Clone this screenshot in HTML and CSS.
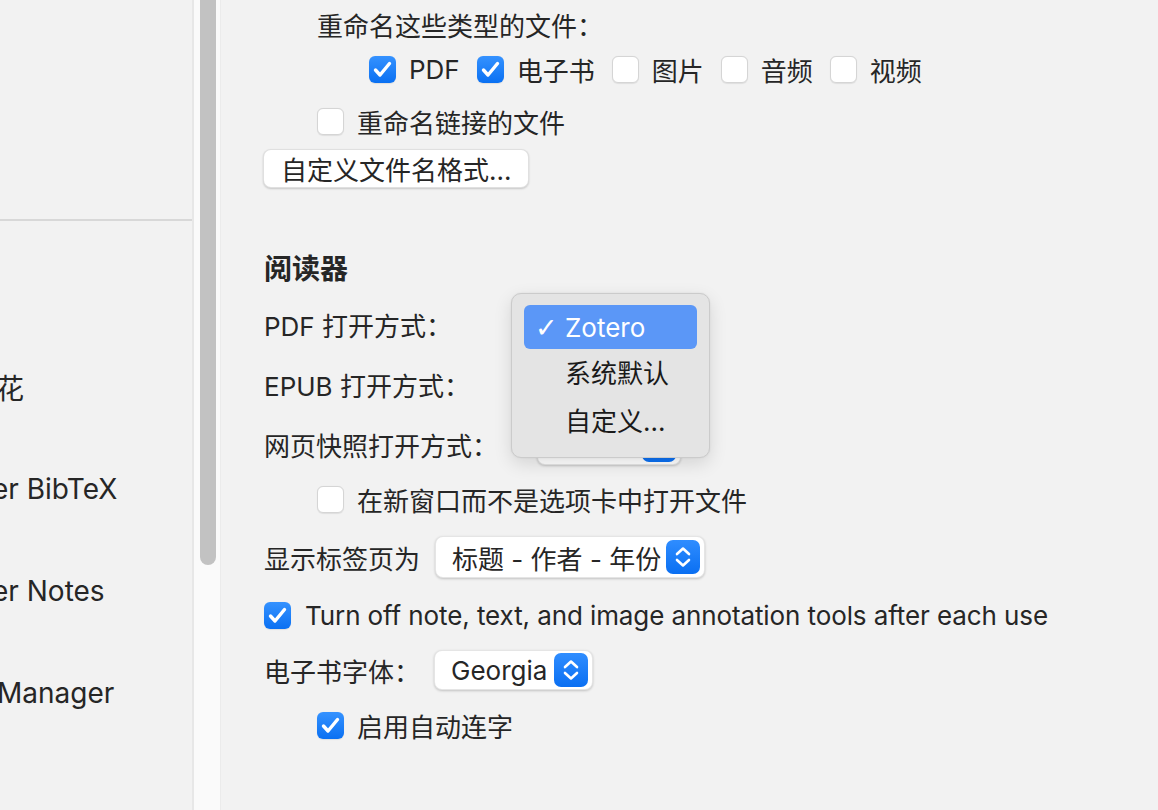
FILE: index.html
```html
<!DOCTYPE html>
<html lang="zh-CN">
<head>
<meta charset="utf-8">
<title>Zotero 设置</title>
<link rel="stylesheet" href="styles.css">
</head>
<body>
<div class="window">
  <aside class="sidebar">
    <div class="side-top"></div>
    <div class="side-divider"></div>
    <ul class="side-list">
      <li class="side-item">茉莉花</li>
      <li class="side-item">Better BibTeX</li>
      <li class="side-item">Better Notes</li>
      <li class="side-item">DOI Manager</li>
    </ul>
  </aside>
  <div class="scroll-track"><div class="scroll-thumb"></div></div>
  <main class="pane">
    <div class="row row-title indent-1">重命名这些类型的文件：</div>
    <div class="row row-types indent-2">
      <label class="check"><span class="box on"><svg viewBox="0 0 27 27"><path d="M6.5 14l4.5 5L20.5 7.5"/></svg></span><span class="lbl">PDF</span></label>
      <label class="check"><span class="box on"><svg viewBox="0 0 27 27"><path d="M6.5 14l4.5 5L20.5 7.5"/></svg></span><span class="lbl">电子书</span></label>
      <label class="check"><span class="box"></span><span class="lbl">图片</span></label>
      <label class="check"><span class="box"></span><span class="lbl">音频</span></label>
      <label class="check"><span class="box"></span><span class="lbl">视频</span></label>
    </div>
    <div class="row row-linked indent-1">
      <label class="check"><span class="box"></span><span class="lbl">重命名链接的文件</span></label>
    </div>
    <div class="row row-button">
      <button class="btn">自定义文件名格式...</button>
    </div>

    <h2 class="heading">阅读器</h2>

    <div class="open-grid">
      <div class="grid-label">PDF 打开方式：</div>
      <div class="select sel-zotero"><span class="sel-text">Zotero</span><span class="stepper"><svg viewBox="0 0 34 33"><path d="M11 13.5l6-5.5 6 5.5M11 19.5l6 5.5 6-5.5"/></svg></span></div>
      <div class="grid-label">EPUB 打开方式：</div>
      <div class="select sel-zotero"><span class="sel-text">Zotero</span><span class="stepper"><svg viewBox="0 0 34 33"><path d="M11 13.5l6-5.5 6 5.5M11 19.5l6 5.5 6-5.5"/></svg></span></div>
      <div class="grid-label">网页快照打开方式：</div>
      <div class="select sel-zotero"><span class="sel-text">Zotero</span><span class="stepper"><svg viewBox="0 0 34 33"><path d="M11 13.5l6-5.5 6 5.5M11 19.5l6 5.5 6-5.5"/></svg></span></div>
    </div>

    <div class="row row-newwin indent-1">
      <label class="check"><span class="box"></span><span class="lbl">在新窗口而不是选项卡中打开文件</span></label>
    </div>
    <div class="row row-tabs">
      <span class="field-label">显示标签页为</span>
      <div class="select sel-tabs"><span class="sel-text">标题 - 作者 - 年份</span><span class="stepper"><svg viewBox="0 0 34 33"><path d="M11 13.5l6-5.5 6 5.5M11 19.5l6 5.5 6-5.5"/></svg></span></div>
    </div>
    <div class="row row-turnoff">
      <label class="check"><span class="box on"><svg viewBox="0 0 27 27"><path d="M6.5 14l4.5 5L20.5 7.5"/></svg></span><span class="lbl lbl-en">Turn off note, text, and image annotation tools after each use</span></label>
    </div>
    <div class="row row-font">
      <span class="field-label">电子书字体：</span>
      <div class="select sel-font"><span class="sel-text">Georgia</span><span class="stepper"><svg viewBox="0 0 34 33"><path d="M11 13.5l6-5.5 6 5.5M11 19.5l6 5.5 6-5.5"/></svg></span></div>
    </div>
    <div class="row row-liga indent-1">
      <label class="check"><span class="box on"><svg viewBox="0 0 27 27"><path d="M6.5 14l4.5 5L20.5 7.5"/></svg></span><span class="lbl">启用自动连字</span></label>
    </div>

    <div class="popup">
      <div class="pop-item active"><span class="pop-check">✓</span>Zotero</div>
      <div class="pop-item"><span class="pop-check"></span>系统默认</div>
      <div class="pop-item"><span class="pop-check"></span>自定义...</div>
    </div>
  </main>
</div>
</body>
</html>
```

FILE: styles.css
```css
* { box-sizing: border-box; }
html, body { margin: 0; padding: 0; }
body {
  width: 1158px;
  height: 810px;
  overflow: hidden;
  background: #f2f2f2;
  color: #262626;
  font-family: "Inter", "Noto Sans CJK SC", sans-serif;
  font-size: 26px;
}
.window {
  display: flex;
  height: 810px;
}
.sidebar {
  width: 194px;
  flex: none;
  background: #f2f2f2;
  border-right: 2px solid #e7e7e7;
  overflow: hidden;
}
.side-top { height: 219px; }
.side-divider { height: 2px; background: #d8d8d8; }
.side-list {
  list-style: none;
  margin: 0 0 0 -60px;
  padding: 115px 0 0 0;
  font-size: 28px;
}
.side-item {
  height: 102px;
  display: flex;
  align-items: center;
  white-space: nowrap;
}
.scroll-track {
  width: 27px;
  flex: none;
  background: #fafafa;
  border-right: 1px solid #ebebeb;
  padding: 0 4px 0 6px;
}
.scroll-thumb {
  height: 565px;
  background: #c2c2c2;
  border-radius: 0 0 8px 8px;
}
.pane {
  flex: 1;
  position: relative;
  padding-left: 43px;
  display: flex;
  flex-direction: column;
}
.row {
  display: flex;
  align-items: center;
  white-space: nowrap;
}
.indent-1 { padding-left: 53px; }
.indent-2 { padding-left: 105px; }
.row-title { height: 48px; }
.row-types { height: 42px; gap: 17px; }
.row-linked { height: 38px; margin-top: 12px; }
.row-button { margin-top: 9px; }
.heading {
  margin: 60px 0 0 0;
  height: 38px;
  display: flex;
  align-items: center;
  font-size: 28px;
  font-weight: 700;
}
.open-grid {
  margin-top: 9px;
  display: grid;
  grid-template-columns: 273px auto;
  grid-auto-rows: 60px;
  align-items: center;
  justify-items: start;
}
.grid-label { margin-top: -2px; }
.row-newwin { height: 48px; }
.row-tabs { height: 42px; margin-top: 13px; }
.row-turnoff { height: 38px; margin-top: 18px; }
.row-font { height: 40px; margin-top: 16px; }
.row-liga { height: 38px; margin-top: 16px; }

.check {
  display: flex;
  align-items: center;
  gap: 13px;
}
.lbl-en { letter-spacing: -0.1px; margin-left: 1px; }
.box {
  width: 27px;
  height: 27px;
  flex: none;
  border-radius: 6px;
  background: #ffffff;
  border: 1px solid #d5d5d5;
  box-shadow: 0 0.5px 1px rgba(0,0,0,0.08);
  display: flex;
}
.box.on {
  border: none;
  background: linear-gradient(#3592ff, #0a70f2);
}
.box svg { width: 27px; height: 27px; }
.box svg path {
  fill: none;
  stroke: #ffffff;
  stroke-width: 3.4;
  stroke-linecap: round;
  stroke-linejoin: round;
}
.btn {
  font: inherit;
  color: inherit;
  height: 39px;
  padding: 0 17px;
  background: #ffffff;
  border: 0.5px solid rgba(0,0,0,0.12);
  border-radius: 8px;
  box-shadow: 0 1px 2px rgba(0,0,0,0.18);
  margin-left: -1px;
  display: flex;
  align-items: center;
}
.select {
  display: flex;
  align-items: center;
  height: 42px;
  background: #ffffff;
  border-radius: 8px;
  border: 0.5px solid rgba(0,0,0,0.1);
  box-shadow: 0 1px 2.5px rgba(0,0,0,0.2);
  padding: 0 4px 0 16px;
}
.sel-text { flex: 1; white-space: nowrap; }
.stepper {
  width: 34px;
  height: 34px;
  flex: none;
  border-radius: 7px;
  background: linear-gradient(#2f8dff, #0a6ff2);
  display: flex;
}
.stepper svg { width: 34px; height: 34px; }
.stepper svg path {
  fill: none;
  stroke: #ffffff;
  stroke-width: 2.6;
  stroke-linecap: round;
  stroke-linejoin: round;
}
.sel-zotero { width: 144px; height: 40px; }
.sel-tabs { width: 270px; margin-left: 15px; }
.sel-font { width: 159px; height: 40px; margin-left: 14px; }

.popup {
  position: absolute;
  left: 290px;
  top: 293px;
  width: 199px;
  padding: 11px 12px 16px 12px;
  background: #e4e4e4;
  border: 1px solid #cbcbcb;
  border-radius: 10px;
  box-shadow: 0 6px 18px rgba(0,0,0,0.12), 0 0 2px rgba(0,0,0,0.08);
  color: #1a1a1a;
}
.pop-item {
  height: 44px;
  margin-bottom: 2px;
  padding-left: 13px;
  border-radius: 6px;
  display: flex;
  align-items: center;
  white-space: nowrap;
}
.pop-item:nth-child(2) { margin-top: -2px; margin-bottom: 4px; }
.pop-item:last-child { margin-bottom: 0; }
.pop-item.active {
  background: #5b97f7;
  color: #ffffff;
}
.pop-check {
  width: 28px;
  flex: none;
  font-family: "DejaVu Sans", sans-serif;
  font-size: 27px;
  font-weight: 700;
  margin-left: -2px;
  margin-right: 2px;
}
```
